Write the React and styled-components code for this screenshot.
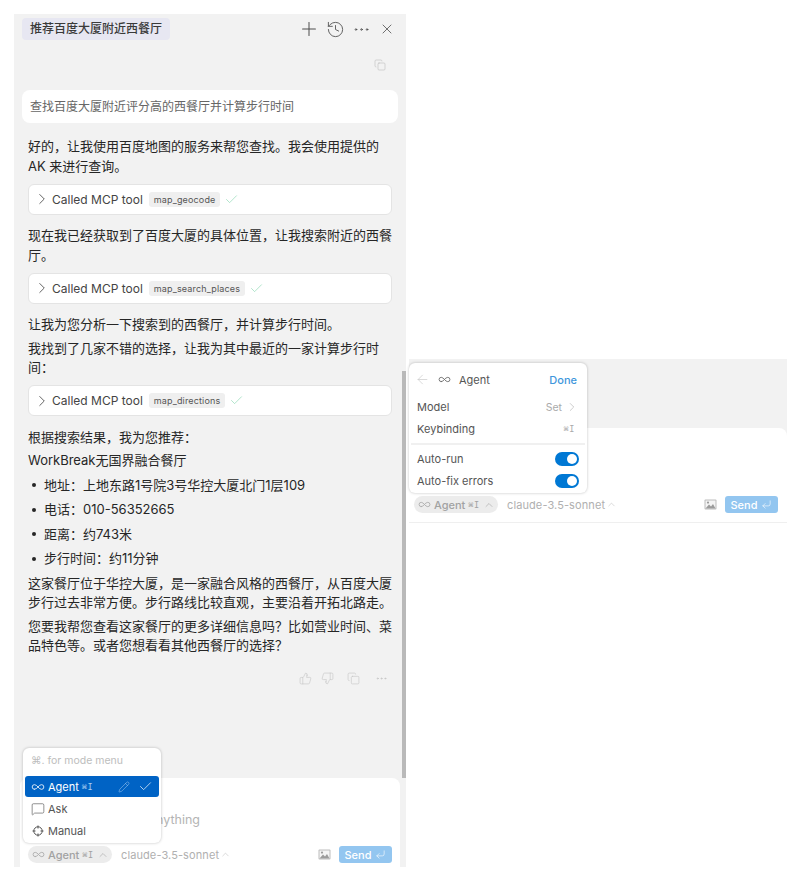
import styled, { createGlobalStyle } from 'styled-components';
import {
  ArrowLeft,
  Check,
  ChevronRight,
  ChevronUp,
  Copy,
  CornerDownLeft,
  History,
  Infinity as InfinityIcon,
  MessageSquare,
  MoreHorizontal,
  Pencil,
  Plus,
  ThumbsDown,
  ThumbsUp,
  X,
} from 'lucide-react';

const GlobalStyle = createGlobalStyle`
  html, body {
    margin: 0;
    background: #fff;
    font-family: Inter, "Noto Sans CJK SC", "Liberation Sans", sans-serif;
    color: #222;
  }
`;

const Page = styled.div`
  display: flex;
  align-items: flex-start;
  width: 792px;
  height: 879px;
  padding: 14px 0 0 14px;
  box-sizing: border-box;
  overflow: hidden;
`;

const ChatPanel = styled.section`
  position: relative;
  flex: none;
  display: flex;
  flex-direction: column;
  width: 392px;
  height: 853px;
  background: #f2f2f2;
`;

const Scrollbar = styled.div`
  position: absolute;
  top: 357px;
  right: 0;
  width: 4px;
  height: 407px;
  background: #b9b9b9;
`;

const Header = styled.header`
  display: flex;
  align-items: center;
  justify-content: space-between;
  padding: 4px 6px 0 8px;
`;

const TitleChip = styled.div`
  padding: 0 8px;
  height: 22px;
  line-height: 22px;
  border-radius: 4px;
  background: #e7e7f2;
  font-size: 12px;
  font-weight: 500;
  color: #3a3a3a;
`;

const HeaderIcons = styled.div`
  display: grid;
  grid-template-columns: repeat(4, 26px);
  align-items: center;
  justify-items: center;
  color: #4d4d4d;
`;

const CopyRow = styled.div`
  display: flex;
  justify-content: flex-end;
  height: 12px;
  margin-top: 19px;
  padding-right: 20px;
  color: #bdbdbd;
`;

const Messages = styled.div`
  flex: 1;
  display: flex;
  flex-direction: column;
  padding: 19px 8px 0;
`;

const UserBubble = styled.div`
  height: 33px;
  line-height: 33px;
  padding: 0 8px;
  border-radius: 8px;
  background: #fff;
  font-size: 12px;
  color: #666;
  margin-bottom: 13px;
`;

const Reply = styled.div`
  display: flex;
  flex-direction: column;
  gap: 4px;
  padding: 0 6px;
`;

const Para = styled.p`
  margin: 0 0 -1px;
  padding-top: 1px;
  font-size: 13px;
  line-height: 19.5px;
  color: #262626;
`;

const ToolCard = styled.div`
  display: flex;
  align-items: center;
  height: 31px;
  margin: 4.5px 0 6.5px;
  padding-left: 4px;
  box-sizing: border-box;
  background: #fff;
  border: 1px solid #e4e4e4;
  border-radius: 6px;
  font-size: 12px;
  color: #444;
`;

const ToolLabel = styled.span`
  margin-left: 1px;
  font-size: 12px;
`;

const ToolChip = styled.span`
  margin: 0 4px 0 6px;
  padding: 0 5px;
  height: 15px;
  line-height: 15px;
  border-radius: 3px;
  background: #efefef;
  font-size: 9px;
  letter-spacing: 0.15px;
  color: #555;
`;

const BulletList = styled.ul`
  display: flex;
  flex-direction: column;
  gap: 5px;
  margin: 1px 0;
  padding: 0;
  list-style: none;
`;

const BulletItem = styled.li`
  display: flex;
  align-items: center;
  margin-bottom: -1px;
  padding-top: 1px;
  font-size: 13px;
  line-height: 19.5px;
  color: #262626;

  &::before {
    content: '';
    flex: none;
    width: 4px;
    height: 4px;
    margin: 0 8.5px 0 3.5px;
    border-radius: 50%;
    background: #262626;
  }
`;

const ActionRow = styled.div`
  display: flex;
  justify-content: flex-end;
  align-items: center;
  margin-top: 13px;
  padding-right: 4px;
  color: #c4c4c4;
`;

const ActionIcon = styled.span`
  display: flex;
  margin-left: ${(p) => p.$gap || 0}px;
`;

const Composer = styled.div`
  display: flex;
  flex-direction: column;
  justify-content: flex-end;
  height: ${(p) => p.$height}px;
  margin: ${(p) => p.$margin};
  padding: ${(p) => p.$padding};
  box-sizing: border-box;
  background: #fff;
  border-radius: 8px 8px 0 0;
  border-bottom: ${(p) => (p.$bordered ? '1px solid #efefef' : 'none')};
`;

const Placeholder = styled.div`
  margin: 0 0 19px;
  padding-left: 9px;
  font-size: 12.5px;
  color: #b4b4b4;
`;

const ComposerBar = styled.div`
  display: flex;
  align-items: center;
`;

const AgentPill = styled.div`
  display: flex;
  align-items: center;
  gap: 3px;
  height: 17px;
  width: 84px;
  padding-left: 4px;
  box-sizing: border-box;
  border-radius: 9px;
  background: #ececec;
  font-size: 11px;
  font-weight: 500;
  color: #a2a2a2;
`;

const Kbd = styled.span`
  font-family: "DejaVu Sans Mono", "Liberation Mono", monospace;
  font-size: 8.5px;
  letter-spacing: 0.6px;
  color: ${(p) => p.$color || 'inherit'};
`;

const KeyHint = styled(Kbd)`
  margin-right: 4px;
`;

const ModelName = styled.div`
  display: flex;
  align-items: center;
  gap: 1px;
  margin-left: 9px;
  font-size: 11px;
  letter-spacing: 0.1px;
  color: #b0b0b0;
`;

const BarEnd = styled.div`
  display: flex;
  align-items: center;
  gap: 8px;
  margin-left: auto;
`;

const SendButton = styled.div`
  display: flex;
  align-items: center;
  gap: 4px;
  width: 53px;
  height: 17px;
  justify-content: center;
  border-radius: 3px;
  background: #93c6f0;
  color: #fff;
  font-size: 11px;
  font-weight: 500;
`;

const ModeMenu = styled.div`
  position: absolute;
  left: 9px;
  top: 734px;
  width: 138px;
  height: 95px;
  box-sizing: border-box;
  padding: 0 2px;
  background: #fff;
  border-radius: 6px;
  box-shadow: 0 0 3px rgba(0, 0, 0, 0.25);
  font-size: 11px;
`;

const MenuHint = styled.div`
  height: 28px;
  line-height: 25px;
  padding-left: 6px;
  color: #bdbdbd;
  font-size: 10.5px;
`;

const ModeRow = styled.div`
  display: flex;
  align-items: center;
  gap: 3px;
  height: 21px;
  margin-bottom: 1px;
  padding: 0 6px;
  border-radius: 3px;
  background: ${(p) => (p.$active ? '#0063c5' : 'transparent')};
  color: ${(p) => (p.$active ? '#fff' : '#555')};
`;

const RowEnd = styled.div`
  display: flex;
  align-items: center;
  gap: 8px;
  margin-left: auto;
`;

const SettingsPanel = styled.section`
  position: relative;
  flex: none;
  display: flex;
  flex-direction: column;
  justify-content: flex-end;
  width: 378px;
  height: 164px;
  margin: 345px 0 0 3px;
  background: #f2f2f2;
`;

const SettingsMenu = styled.div`
  position: absolute;
  left: 0;
  top: 4px;
  width: 178px;
  height: 130px;
  box-sizing: border-box;
  background: #fff;
  border-radius: 6px;
  box-shadow: 0 0 3px rgba(0, 0, 0, 0.25);
  font-size: 11px;
  color: #555;
`;

const SettingsHead = styled.div`
  display: flex;
  align-items: center;
  gap: 8px;
  height: 33px;
  padding: 0 10px 0 6px;
`;

const DoneLink = styled.span`
  margin-left: auto;
  color: #3f97dc;
  font-weight: 500;
`;

const SettingRow = styled.div`
  display: flex;
  align-items: center;
  justify-content: space-between;
  height: 22px;
  padding: 0 8px;
`;

const SetValue = styled.span`
  display: flex;
  align-items: center;
  gap: 3px;
  color: #aaa;
  font-size: 10.5px;
`;

const Divider = styled.div`
  height: 2px;
  margin: 3px 2px 3px;
  background: #f0f0f0;
`;

const Toggle = styled.span`
  position: relative;
  width: 24px;
  height: 14px;
  border-radius: 7px;
  background: #0078d4;

  &::after {
    content: '';
    position: absolute;
    top: 2px;
    right: 2px;
    width: 10px;
    height: 10px;
    border-radius: 50%;
    background: #fff;
  }
`;

const ImageIcon = () => (
  <svg width="13" height="11" viewBox="0 0 13 11">
    <rect x="0.5" y="0.5" width="12" height="10" rx="1" fill="#bdbdbd" />
    <rect x="1.5" y="1.5" width="10" height="8" fill="#f4f4f4" />
    <circle cx="4" cy="3.6" r="1.1" fill="#9c9c9c" />
    <path d="M1.5 9.5 L5 5.5 L7 7.5 L9 5 L11.5 9.5 Z" fill="#9c9c9c" />
  </svg>
);

// lucide's crosshair has its ticks inside the ring, this one crosses it
const ManualIcon = () => (
  <svg width="14" height="14" viewBox="0 0 14 14" fill="none" stroke="currentColor" strokeWidth="1">
    <circle cx="7" cy="7" r="4.2" />
    <path d="M7 1.5V4.5M7 9.5V12.5M1.5 7H4.5M9.5 7H12.5" />
  </svg>
);

const ComposerFooter = () => (
  <ComposerBar>
    <AgentPill>
      <InfinityIcon size={13} strokeWidth={1.4} />
      Agent
      <Kbd>⌘I</Kbd>
      <ChevronUp size={12} strokeWidth={1.2} />
    </AgentPill>
    <ModelName>
      claude-3.5-sonnet
      <ChevronUp size={11} strokeWidth={1.2} color="#bdbdbd" />
    </ModelName>
    <BarEnd>
      <ImageIcon />
      <SendButton>
        Send
        <CornerDownLeft size={11} strokeWidth={1.3} />
      </SendButton>
    </BarEnd>
  </ComposerBar>
);

const Tool = ({ name }) => (
  <ToolCard>
    <ChevronRight size={18} strokeWidth={1.1} />
    <ToolLabel>Called MCP tool</ToolLabel>
    <ToolChip>{name}</ToolChip>
    <Check size={15} strokeWidth={1} color="#84d6ad" />
  </ToolCard>
);

const App = () => {
  return (
    <Page>
      <GlobalStyle />
      <ChatPanel>
        <Header>
          <TitleChip>推荐百度大厦附近西餐厅</TitleChip>
          <HeaderIcons>
            <Plus size={22} strokeWidth={1.1} />
            <History size={19} strokeWidth={1.1} />
            <MoreHorizontal size={19} strokeWidth={1.1} />
            <X size={16} strokeWidth={1.2} />
          </HeaderIcons>
        </Header>
        <CopyRow>
          <Copy size={12} strokeWidth={1.2} />
        </CopyRow>
        <Messages>
          <UserBubble>查找百度大厦附近评分高的西餐厅并计算步行时间</UserBubble>
          <Reply>
            <Para>好的，让我使用百度地图的服务来帮您查找。我会使用提供的 AK 来进行查询。</Para>
            <Tool name="map_geocode" />
            <Para>现在我已经获取到了百度大厦的具体位置，让我搜索附近的西餐厅。</Para>
            <Tool name="map_search_places" />
            <Para>让我为您分析一下搜索到的西餐厅，并计算步行时间。</Para>
            <Para>我找到了几家不错的选择，让我为其中最近的一家计算步行时间：</Para>
            <Tool name="map_directions" />
            <Para>根据搜索结果，我为您推荐：</Para>
            <Para>WorkBreak无国界融合餐厅</Para>
            <BulletList>
              <BulletItem>地址：上地东路1号院3号华控大厦北门1层109</BulletItem>
              <BulletItem>电话：010-56352665</BulletItem>
              <BulletItem>距离：约743米</BulletItem>
              <BulletItem>步行时间：约11分钟</BulletItem>
            </BulletList>
            <Para>这家餐厅位于华控大厦，是一家融合风格的西餐厅，从百度大厦步行过去非常方便。步行路线比较直观，主要沿着开拓北路走。</Para>
            <Para>您要我帮您查看这家餐厅的更多详细信息吗？比如营业时间、菜品特色等。或者您想看看其他西餐厅的选择？</Para>
            <ActionRow>
              <ActionIcon><ThumbsUp size={13} strokeWidth={1.1} /></ActionIcon>
              <ActionIcon $gap={9}><ThumbsDown size={13} strokeWidth={1.1} /></ActionIcon>
              <ActionIcon $gap={13}><Copy size={13} strokeWidth={1.1} /></ActionIcon>
              <ActionIcon $gap={15}><MoreHorizontal size={13} strokeWidth={1.4} /></ActionIcon>
            </ActionRow>
          </Reply>
        </Messages>
        <Composer $height={89} $margin="0 6px" $padding="0 8px 4px">
          <Placeholder>Plan, search, build anything</Placeholder>
          <ComposerFooter />
        </Composer>
        <Scrollbar />
        <ModeMenu>
          <MenuHint>⌘. for mode menu</MenuHint>
          <ModeRow $active>
            <InfinityIcon size={14} strokeWidth={1.4} />
            Agent
            <Kbd $color="#a9cdf0">⌘I</Kbd>
            <RowEnd>
              <Pencil size={12} strokeWidth={1} color="#a9cdf0" />
              <Check size={15} strokeWidth={1.1} />
            </RowEnd>
          </ModeRow>
          <ModeRow>
            <MessageSquare size={14} strokeWidth={1.1} />
            Ask
          </ModeRow>
          <ModeRow>
            <ManualIcon />
            Manual
          </ModeRow>
        </ModeMenu>
      </ChatPanel>
      <SettingsPanel>
        <Composer $height={95} $margin="0" $padding="0 9px 9px 5px" $bordered>
          <ComposerFooter />
        </Composer>
        <SettingsMenu>
          <SettingsHead>
            <ArrowLeft size={15} strokeWidth={1} color="#c4c4c4" />
            <InfinityIcon size={13} strokeWidth={1.4} />
            Agent
            <DoneLink>Done</DoneLink>
          </SettingsHead>
          <SettingRow>
            Model
            <SetValue>
              Set
              <ChevronRight size={14} strokeWidth={1} />
            </SetValue>
          </SettingRow>
          <SettingRow>
            Keybinding
            <KeyHint $color="#aaa">⌘I</KeyHint>
          </SettingRow>
          <Divider />
          <SettingRow>
            Auto-run
            <Toggle />
          </SettingRow>
          <SettingRow>
            Auto-fix errors
            <Toggle />
          </SettingRow>
        </SettingsMenu>
      </SettingsPanel>
    </Page>
  );
};

export default App;
